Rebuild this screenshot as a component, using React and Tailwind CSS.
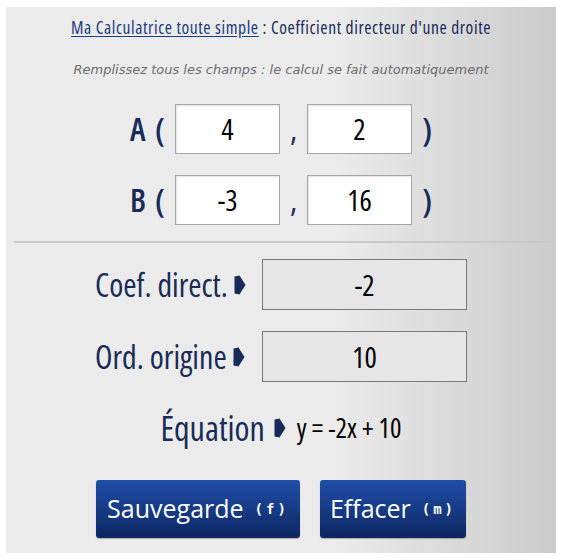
import React from 'react';

const Arrow = () => (
    <svg width="12" height="20" viewBox="0 0 12 20" className="shrink-0">
        <path d="M0.5 1.5 L5.5 0.5 L11.5 10 L5.5 19.5 L0.5 18.5 Z" fill="#182b58" />
    </svg>
);

const CoordInput = ({ value }) => (
    <div className="w-[105px] h-[50px] bg-white border border-[#a6a6a6] shadow-[inset_1px_1px_2px_rgba(0,0,0,0.12)] flex items-center justify-center text-[29px] font-medium text-black">
        {value}
    </div>
);

const PointRow = ({ name, x, y }) => (
    <div className="flex items-center text-[#182b58] text-[32px] font-semibold font-['Open_Sans'] [font-stretch:75%]">
        <span className="w-[25px]">{name}</span>
        <span className="w-[20px]">(</span>
        <CoordInput value={x} />
        <span className="w-[27px] text-center font-normal">,</span>
        <CoordInput value={y} />
        <span className="w-[20px] text-right">)</span>
    </div>
);

const ResultRow = ({ label, value }) => (
    <div className="flex items-center gap-[10px] font-['Open_Sans'] [font-stretch:75%]">
        <div className="w-[157px] flex items-center gap-[6px] text-[32px] font-medium text-[#182b58] whitespace-nowrap">
            <span>{label}</span>
            <Arrow />
        </div>
        <div className="w-[205px] h-[51px] bg-[#e6e6e6] border border-[#787878] flex items-center justify-center text-[29px] font-medium text-black">
            {value}
        </div>
    </div>
);

const Button = ({ label, shortcut, width }) => (
    <button className={`${width} h-[58px] rounded-[3px] bg-gradient-to-b from-[#1f4ea8] via-[#163b86] to-[#0e2660] text-white flex items-center justify-center gap-[11px] shadow-[0_1px_1px_rgba(0,0,0,0.25)]`}>
        <span className="text-[25px] font-medium font-['Open_Sans']">{label}</span>
        <span className="text-[14px] font-bold tracking-[3px] font-['DejaVu_Sans_Mono']">{shortcut}</span>
    </button>
);

export default function App() {
    return (
        <div className="bg-white min-h-[560px] pt-[7px] pl-[6px]">
            <div className="w-[550px] h-[546px] bg-gradient-to-r from-[#ebebeb] from-60% to-[#cbcbcb] flex flex-col items-center">
                {/* header */}
                <p className="mt-[9px] h-[22px] leading-[22px] text-[17.5px] tracking-[0.6px] text-[#182b58] font-['Open_Sans'] [font-stretch:75%] whitespace-nowrap">
                    <a href="#" className="text-[#1c3b80] underline underline-offset-2">Ma Calculatrice toute simple</a> : Coefficient directeur d'une droite
                </p>
                <p className="mt-[24px] h-[16px] leading-[16px] text-[13px] italic text-[#6b6b6b] font-['DejaVu_Sans'] whitespace-nowrap">
                    Remplissez tous les champs : le calcul se fait automatiquement
                </p>

                {/* points */}
                <div className="mt-[26px] flex flex-col gap-[21px]">
                    <PointRow name="A" x="4" y="2" />
                    <PointRow name="B" x="-3" y="16" />
                </div>

                <div className="mt-[16px] w-[534px] h-[2px] bg-[#c9c9c9]" />

                {/* results */}
                <div className="mt-[16px] flex flex-col gap-[21px]">
                    <ResultRow label="Coef. direct." value="-2" />
                    <ResultRow label="Ord. origine" value="10" />
                </div>

                <div className="mt-[26px] h-[40px] flex items-center gap-[9px] font-['Open_Sans'] [font-stretch:75%] whitespace-nowrap">
                    <span className="text-[34px] font-medium text-[#182b58]">Équation</span>
                    <Arrow />
                    <span className="ml-[2px] text-[27px] font-medium text-black">y = -2x + 10</span>
                </div>

                {/* buttons */}
                <div className="mt-[32px] flex gap-[20px]">
                    <Button label="Sauvegarde" shortcut="(f)" width="w-[204px]" />
                    <Button label="Effacer" shortcut="(m)" width="w-[146px]" />
                </div>
            </div>
        </div>
    );
}
